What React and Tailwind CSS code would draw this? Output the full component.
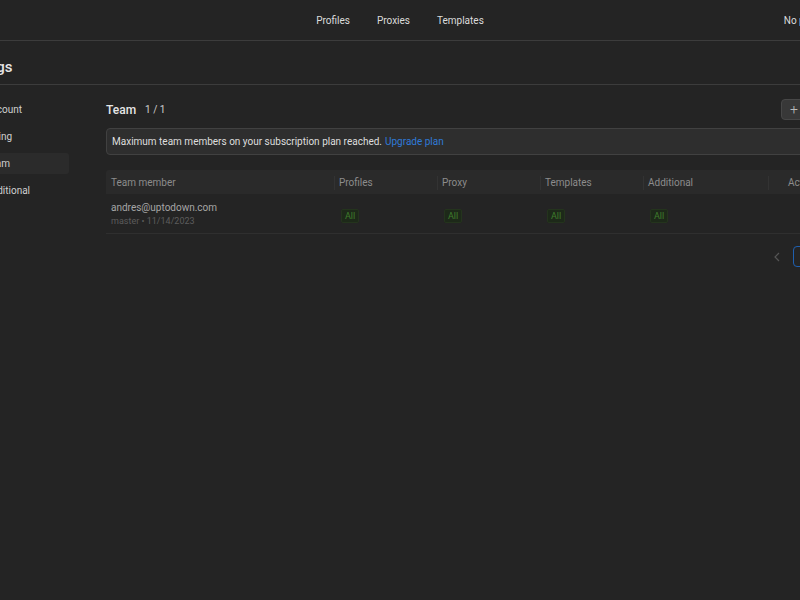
import React from "react";

const cols = [
  { label: "Team member", w: "w-[228px]", pl: "pl-[5px]" },
  { label: "Profiles", w: "w-[103px]", pl: "pl-[5px]" },
  { label: "Proxy", w: "w-[103px]", pl: "pl-[5px]" },
  { label: "Templates", w: "w-[103px]", pl: "pl-[5px]" },
  { label: "Additional", w: "w-[125px]", pl: "pl-[5px]" },
  { label: "Actions", w: "w-[100px]", pl: "pl-[20px]" },
];

function Badge() {
  return (
    <span className="inline-flex items-center justify-center w-[18px] h-[14px] rounded-[2px] bg-[#1d2919] border border-[#24341d] text-[9px] text-[#3f7d2c] leading-none">
      All
    </span>
  );
}

export default function App() {
  return (
    <div
      className="w-[800px] h-[600px] overflow-hidden bg-[#242424] text-[#d6d6d6]"
      style={{ fontFamily: "Roboto, 'Noto Sans', Arial, sans-serif" }}
    >
      <div className="w-[1000px] ml-[-100px]">
        {/* top nav */}
        <div className="h-[41px] border-b border-[#3c3c3c] grid grid-cols-[1fr_auto_1fr] items-center pt-[1px]">
          <div />
          <div className="flex items-center gap-[27px] text-[10px] text-[#dcdcdc]">
            <span>Profiles</span>
            <span>Proxies</span>
            <span>Templates</span>
          </div>
          <div className="pl-[300px] text-[10px] text-[#dcdcdc] whitespace-nowrap">No proxy</div>
        </div>
        {/* title */}
        <div className="h-[44px] border-b border-[#3c3c3c] flex items-center pl-[57px] pt-[10px]">
          <span className="text-[15px] font-medium text-[#e6e6e6]">Settings</span>
        </div>
        {/* body */}
        <div className="flex pt-[14px]">
          <div className="w-[169px] shrink-0 pl-[72px] flex flex-col gap-[6px] text-[10px] text-[#d0d0d0]">
            <div className="h-[21px] flex items-center pl-[13px]">Account</div>
            <div className="h-[21px] flex items-center pl-[13px]">Billing</div>
            <div className="h-[21px] flex items-center pl-[13px] bg-[#2b2b2b] rounded-[3px]">Team</div>
            <div className="h-[21px] flex items-center pl-[13px]">Additional</div>
          </div>
          <div className="ml-[37px] flex-1 min-w-0 pr-[79px]">
            <div className="h-[21px] flex items-center">
              <span className="text-[12px] font-medium text-[#e6e6e6]">Team</span>
              <span className="ml-[9px] text-[10px] text-[#cfcfcf]">1 / 1</span>
              <div className="ml-auto w-[40px] h-[21px] rounded-[4px] bg-[#383838] border border-[#474747] flex items-center pl-[8px] text-[#bbbbbb] text-[14px] font-light">
                +
              </div>
            </div>
            <div className="mt-[8px] h-[27px] rounded-[4px] bg-[#2e2e2e] border border-[#414141] flex items-center px-[5px] text-[10px] text-[#dedede]">
              Maximum team members on your subscription plan reached.
              <span className="ml-[3px] text-[#2f7ad8]">Upgrade plan</span>
            </div>
            <div className="mt-[15px]">
              <div className="h-[24px] bg-[#2a2a2a] flex items-center text-[10px] text-[#8c8c8c] rounded-t-[3px] pt-[1px]">
                {cols.map((c, i) => (
                  <div key={c.label} className={`${c.w} ${c.pl} shrink-0 h-full flex items-center relative`}>
                    {i > 0 && <span className="absolute left-0 top-[5px] h-[14px] w-px bg-[#333333]" />}
                    {c.label}
                  </div>
                ))}
              </div>
              <div className="h-[40px] border-b border-[#2f2f2f] flex items-center">
                <div className="w-[228px] shrink-0 pl-[5px] flex flex-col justify-center pt-[1px]">
                  <span className="text-[10px] text-[#a6a6a6] leading-[15px]">andres@uptodown.com</span>
                  <span className="text-[9px] text-[#5c5c5c] leading-[13px]">master • 11/14/2023</span>
                </div>
                <div className="w-[103px] shrink-0 pl-[7px]"><Badge /></div>
                <div className="w-[103px] shrink-0 pl-[7px]"><Badge /></div>
                <div className="w-[103px] shrink-0 pl-[7px]"><Badge /></div>
                <div className="w-[125px] shrink-0 pl-[7px]"><Badge /></div>
              </div>
              <div className="mt-[12px] flex items-center pl-[667px]">
                <svg width="8" height="10" viewBox="0 0 8 10" className="shrink-0">
                  <path d="M6 1 L2 5 L6 9" fill="none" stroke="#555555" strokeWidth="1.2" />
                </svg>
                <div className="ml-[12px] shrink-0 w-[22px] h-[21px] rounded-[4px] border border-[#1f5fae] flex items-center justify-center text-[10px] text-[#2f7ad8]">
                  1
                </div>
                <svg width="8" height="10" viewBox="0 0 8 10" className="ml-[12px] shrink-0">
                  <path d="M2 1 L6 5 L2 9" fill="none" stroke="#555555" strokeWidth="1.2" />
                </svg>
              </div>
            </div>
          </div>
        </div>
      </div>
    </div>
  );
}
